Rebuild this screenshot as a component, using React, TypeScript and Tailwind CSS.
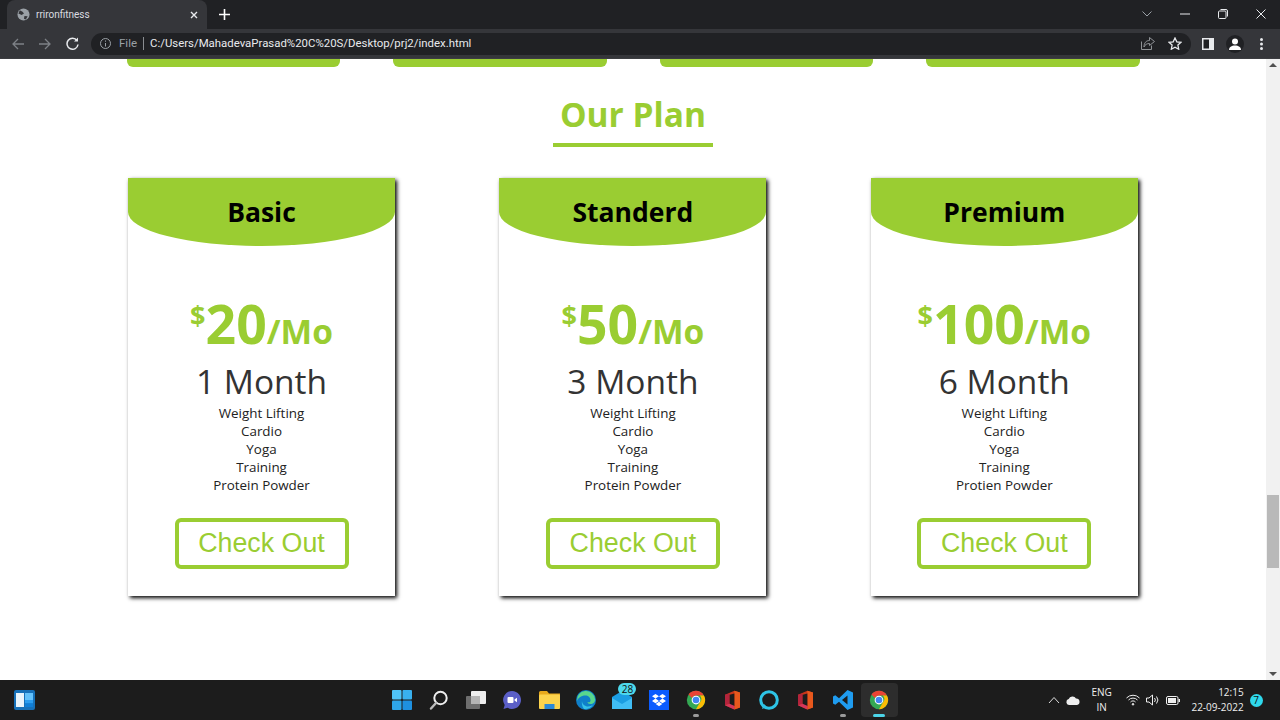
import { ReactNode } from "react";

const plans = [
  { name: "Basic", price: "20", term: "1 Month", last: "Protein Powder" },
  { name: "Standerd", price: "50", term: "3 Month", last: "Protein Powder" },
  { name: "Premium", price: "100", term: "6 Month", last: "Protien Powder" },
];

const PlanCard = ({ plan }: { plan: (typeof plans)[number] }) => (
  <div className="w-[267px] h-[418px] bg-white flex flex-col items-center shadow-[2px_2px_4px_#000000]">
    <div className="w-full h-[68px] bg-[#9acd32] rounded-b-[50%] flex justify-center pt-[14px]">
      <h3 className="text-[26.5px] leading-[40px] font-bold text-black">{plan.name}</h3>
    </div>
    <div className="mt-[40px] h-[75px] flex items-start text-[#9acd32] font-bold">
      <span className="text-[27px] leading-[40px] mt-[9px]">$</span>
      <span className="text-[53.5px] leading-[76px]">{plan.price}</span>
      <span className="text-[33.5px] leading-[44px] mt-[23px]">/Mo</span>
    </div>
    <div className="text-[33.5px] leading-[46px] text-[#333] mt-[-3px]">{plan.term}</div>
    <ul className="text-[13.4px] leading-[18px] text-[#222] text-center">
      <li>Weight Lifting</li>
      <li>Cardio</li>
      <li>Yoga</li>
      <li>Training</li>
      <li>{plan.last}</li>
    </ul>
    <button className="mt-[24px] w-[174px] h-[51px] border-[4px] border-[#9acd32] rounded-[6px] text-[#9acd32] text-[26.8px] font-['Liberation_Sans',sans-serif]">
      Check Out
    </button>
  </div>
);

const ChromeLogo = () => (
  <svg width="20" height="20" viewBox="0 0 48 48">
    <circle cx="24" cy="24" r="22" fill="#34a853" />
    <path d="M24 2a22 22 0 0 1 19 11H24a11 11 0 0 0-10 6L6 11A22 22 0 0 1 24 2z" fill="#ea4335" />
    <path d="M43 13a22 22 0 0 1-19 33l10-17a11 11 0 0 0-1-16z" fill="#fbbc05" />
    <circle cx="24" cy="24" r="10.5" fill="#fff" />
    <circle cx="24" cy="24" r="8" fill="#4285f4" />
  </svg>
);

const OfficeLogo = () => (
  <svg width="15" height="20" viewBox="0 0 16 20">
    <path d="M0 4.500L10 0l6 2v16l-6 2-10-4.500z" fill="#c9361a" />
    <path d="M10 0l6 2v16l-6 2z" fill="#e8581d" />
    <path d="M0 4.500L5 3v11l-5 1.500z" fill="#b3243c" />
    <path d="M5 4.500l5-1.500v13.500l-5-1.500z" fill="#1c1c1c" />
    <path d="M0 15.500l5-1.500 5 2.500V20z" fill="#d6365a" />
  </svg>
);

const Slot = ({ children, dot, active }: { children: ReactNode; dot?: "gray" | "cyan"; active?: boolean }) => (
  <div className={`relative w-[36.7px] h-[34px] flex items-center justify-center rounded ${active ? "bg-[#2d2d2d]" : ""}`}>
    {children}
    {dot && (
      <span className={`absolute bottom-0 h-[3px] rounded-full ${dot === "cyan" ? "w-[12px] bg-[#4cd4e8]" : "w-[6px] bg-[#9a9a9a]"}`} />
    )}
  </div>
);

const Taskbar = () => (
  <div className="h-[40px] bg-[#1c1c1c] flex items-center text-white shrink-0 font-['Open_Sans',sans-serif]">
    {/* widgets */}
    <svg className="ml-[14px]" width="21" height="20" viewBox="0 0 21 20">
      <rect width="21" height="20" rx="2" fill="#1670b8" />
      <rect x="2" y="3" width="8" height="14" fill="#e8f4fc" />
      <rect x="11" y="3" width="8" height="7" fill="#63c1fa" />
      <rect x="11" y="10" width="8" height="3.5" fill="#2a9df0" />
      <rect x="11" y="13.5" width="8" height="3.5" fill="#0f7fd8" />
    </svg>
    <div className="ml-[349px] flex items-center">
      <Slot>
        <svg width="20" height="20" viewBox="0 0 20 20">
          <rect x="0" y="0" width="9.5" height="9.5" rx="1" fill="#4fc3f7" />
          <rect x="10.5" y="0" width="9.5" height="9.5" rx="1" fill="#39b0ee" />
          <rect x="0" y="10.5" width="9.5" height="9.5" rx="1" fill="#2ea6ea" />
          <rect x="10.5" y="10.5" width="9.5" height="9.5" rx="1" fill="#1e90e0" />
        </svg>
      </Slot>
      <Slot>
        <svg width="20" height="20" viewBox="0 0 20 20" fill="none">
          <circle cx="11.5" cy="8" r="6.2" stroke="#eee" strokeWidth="2" />
          <path d="M7 13l-5 5.5" stroke="#bbb" strokeWidth="2.4" strokeLinecap="round" />
        </svg>
      </Slot>
      <Slot>
        <svg width="20" height="19" viewBox="0 0 20 19">
          <rect x="5" y="0" width="15" height="13" rx="1" fill="#eee" />
          <rect x="0" y="5" width="14" height="13" rx="1" fill="#6e6e6e" />
          <rect x="5" y="5" width="9" height="8" fill="#b5b5b5" />
        </svg>
      </Slot>
      <Slot>
        <svg width="20" height="20" viewBox="0 0 20 20">
          <path d="M10 1a9 9 0 1 1-4.5 16.8L1.5 19l1.2-4A9 9 0 0 1 10 1z" fill="#5b5fc7" />
          <rect x="5.5" y="7" width="6" height="6" rx="1" fill="#fff" />
          <path d="M12.5 9.5l2.5-1.8v4.6l-2.5-1.8z" fill="#fff" />
        </svg>
      </Slot>
      <Slot>
        <svg width="21" height="18" viewBox="0 0 21 18">
          <path d="M0 1.5A1.5 1.5 0 0 1 1.500 0H8l2 2.500h11V5H0z" fill="#e8a91c" />
          <rect x="0" y="3.500" width="21" height="14.500" rx="1" fill="#fcd34d" />
          <rect x="5.500" y="13" width="10" height="5" fill="#2b88d8" />
        </svg>
      </Slot>
      <Slot>
        <svg width="20" height="20" viewBox="0 0 20 20" fill="none">
          <circle cx="10" cy="10" r="10" fill="#0f7fc9" />
          <path d="M1 11a9 9 0 0 1 18-2c.5 3-2 5-4.500 5-2 0-3-1-3-2 1 .500 3 .500 3-1.500C14.500 7 12 5.500 9.500 5.500 5 5.500 2 8 1 11z" fill="#58d68d" />
          <path d="M6 11c0 3 3 5.500 6 5.500 2 0 4-.800 5-2-2 4-6 5-9 4.500C6 16.500 5.500 13 6 11z" fill="#36c2e8" />
        </svg>
      </Slot>
      <Slot>
        <div className="relative">
          <svg width="20" height="18" viewBox="0 0 20 18">
            <path d="M0 6l10-6 10 6v12H0z" fill="#1b9de2" />
            <path d="M0 7l10 6 10-6v11H0z" fill="#40bdf5" />
          </svg>
          <span className="absolute left-[6px] top-[-8px] w-[18px] h-[12px] rounded-full bg-[#4dd9ec] text-[#111] text-[10px] leading-[12px] text-center">28</span>
        </div>
      </Slot>
      <Slot>
        <svg width="20" height="20" viewBox="0 0 20 20">
          <rect width="20" height="20" fill="#0b5cff" />
          <path d="M6.500 4L10 6.300 6.500 8.600 3 6.300zM13.500 4L17 6.300l-3.500 2.300L10 6.300zM6.500 8.600L10 10.900l-3.500 2.300L3 10.900zM13.500 8.600l3.500 2.300-3.500 2.300L10 10.900zM6.700 14l3.300-2.200 3.300 2.200-3.300 2.200z" fill="#fff" />
        </svg>
      </Slot>
      <Slot dot="gray"><ChromeLogo /></Slot>
      <Slot><OfficeLogo /></Slot>
      <Slot>
        <svg width="20" height="20" viewBox="0 0 20 20" fill="none">
          <circle cx="10" cy="10" r="8.300" stroke="#2ec4e6" strokeWidth="3" />
          <path d="M3 19l2-5 3 3z" fill="#2ec4e6" />
        </svg>
      </Slot>
      <Slot><OfficeLogo /></Slot>
      <Slot dot="gray">
        <svg width="20" height="20" viewBox="0 0 20 20">
          <path d="M14.500 0L20 2.500v15L14.500 20 6 11.800l-3.700 2.900L0 13.500v-7l2.300-1.200L6 8.200z" fill="#1f9cf0" />
          <path d="M14.500 5.500L9 10l5.500 4.500z" fill="#1c1c1c" />
        </svg>
      </Slot>
      <Slot dot="cyan" active><ChromeLogo /></Slot>
    </div>
    {/* tray */}
    <div className="ml-[150px] flex items-center">
      <svg width="12" height="8" viewBox="0 0 12 8" fill="none">
        <path d="M1 7l5-5.500L11 7" stroke="#ddd" strokeWidth="1" />
      </svg>
      <svg className="ml-[6px]" width="14" height="9" viewBox="0 0 14 9">
        <path d="M3 9a3 3 0 0 1-.300-5.900A4 4 0 0 1 10 2.500 3.300 3.300 0 0 1 11 9z" fill="#eee" />
      </svg>
      <div className="ml-[8px] w-[28px] text-center text-[10px] leading-[15px] text-[#eee]">
        <div>ENG</div>
        <div>IN</div>
      </div>
      <svg className="ml-[10px]" width="14" height="12" viewBox="0 0 14 12" fill="none" stroke="#eee" strokeWidth="1">
        <path d="M.5 4a9 9 0 0 1 13 0M2.500 6a6.200 6.200 0 0 1 9 0M4.500 8a3.400 3.400 0 0 1 5 0" />
        <circle cx="7" cy="10.300" r=".8" fill="#eee" />
      </svg>
      <svg className="ml-[6px]" width="14" height="12" viewBox="0 0 14 12" fill="none" stroke="#eee" strokeWidth="1">
        <path d="M.5 4h2.500L6.500 1v10L3 8H.5z" />
        <path d="M8.500 4a3 3 0 0 1 0 4M10.500 2.500a5.500 5.500 0 0 1 0 7" />
      </svg>
      <svg className="ml-[6px]" width="14" height="9" viewBox="0 0 14 9">
        <rect x=".5" y=".5" width="11.500" height="8" rx="1.500" fill="none" stroke="#eee" />
        <rect x="2" y="2" width="8" height="5" fill="#eee" />
        <rect x="12.500" y="3" width="1.500" height="3" fill="#eee" />
      </svg>
      <div className="ml-[6px] w-[58px] text-right text-[10px] leading-[15px] text-[#eee] whitespace-nowrap">
        <div>12:15</div>
        <div>22-09-2022</div>
      </div>
      <span className="ml-[6px] w-[13px] h-[13px] rounded-full bg-[#2fd9ec] text-[#111] text-[10px] leading-[13px] text-center">7</span>
    </div>
  </div>
);

const BrowserChrome = () => (
  <div className="shrink-0 h-[59px] flex flex-col font-['Roboto',sans-serif]">
    <div className="h-[29px] bg-[#202124] flex items-end pl-[7px] text-[#e8eaed]">
      <div className="w-[200px] h-[29px] bg-[#35363a] rounded-t-[8px] flex items-center pl-[10px] pr-[9px]">
        <svg width="13" height="13" viewBox="0 0 14 14">
          <circle cx="7" cy="7" r="6.500" fill="#9aa0a6" />
          <path d="M3 2.500l3 1.500 1.500 2-2.500 1.500-3.500-1.500zM8 8.500l3.500.500-2 3.500-2-1z" fill="#35363a" />
        </svg>
        <span className="ml-[6px] text-[10px] leading-none text-[#dadce0]">rrironfitness</span>
        <svg className="ml-auto" width="8" height="8" viewBox="0 0 8 8" stroke="#e8eaed" strokeWidth="1.400">
          <path d="M1 1l6 6M7 1L1 7" />
        </svg>
      </div>
      <svg className="ml-[12px] mb-[9px]" width="11" height="11" viewBox="0 0 11 11" stroke="#fff" strokeWidth="1.600">
        <path d="M5.500 0v11M0 5.500h11" />
      </svg>
      <svg className="ml-auto mb-[12px]" width="10" height="6" viewBox="0 0 10 6" fill="none" stroke="#9aa0a6">
        <path d="M.5.500l4.500 4.500L9.500.500" />
      </svg>
      <svg className="ml-[28px] mb-[14px]" width="10" height="2" viewBox="0 0 10 2" stroke="#e8eaed">
        <path d="M0 1h10" />
      </svg>
      <svg className="ml-[28px] mb-[10px]" width="10" height="10" viewBox="0 0 10 10" fill="none" stroke="#e8eaed">
        <rect x=".5" y="2" width="7.500" height="7.500" rx="1" />
        <path d="M2.500.5h5.500a1.500 1.500 0 0 1 1.500 1.500v5.500" />
      </svg>
      <svg className="ml-[28px] mr-[14px] mb-[10px]" width="10" height="10" viewBox="0 0 10 10" stroke="#e8eaed">
        <path d="M.5.500l9 9M9.500.500l-9 9" />
      </svg>
    </div>
    <div className="h-[30px] bg-[#35363a] flex items-center border-b border-[#3c3d41]">
      <svg className="ml-[12px]" width="12" height="12" viewBox="0 0 12 12" fill="none" stroke="#7d8186" strokeWidth="1.300">
        <path d="M12 6H1M6 1L1 6l5 5" />
      </svg>
      <svg className="ml-[15px]" width="12" height="12" viewBox="0 0 12 12" fill="none" stroke="#7d8186" strokeWidth="1.300">
        <path d="M0 6h11M6 1l5 5-5 5" />
      </svg>
      <svg className="ml-[15px]" width="13" height="13" viewBox="0 0 13 13" fill="none" stroke="#e8eaed" strokeWidth="1.500">
        <path d="M11 3.500A5.500 5.500 0 1 0 12 7.500" />
        <path d="M12 .500v4H8z" fill="#e8eaed" stroke="none" />
      </svg>
      <div className="ml-[12px] w-[1100px] h-[22px] bg-[#202124] rounded-full flex items-center pl-[9px] pr-[9px]">
        <svg width="11" height="11" viewBox="0 0 11 11" fill="none" stroke="#9aa0a6">
          <circle cx="5.500" cy="5.500" r="5" />
          <path d="M5.500 5v3.500M5.500 2.500v1.200" />
        </svg>
        <span className="ml-[8px] text-[11.5px] text-[#9aa0a6]">File</span>
        <span className="ml-[6px] w-px h-[13px] bg-[#8a8d91]" />
        <span className="ml-[6px] text-[11.4px] text-[#e8eaed] whitespace-nowrap">C:/Users/MahadevaPrasad%20C%20S/Desktop/prj2/index.html</span>
        <svg className="ml-auto" width="14" height="13" viewBox="0 0 14 13" fill="none" stroke="#8f9296">
          <path d="M.5 4.500v8h10v-4M8.500.5l5 4-5 4V6.500C6 6.500 4 7.500 3 10c0-4 2-6.500 5.500-6.500z" />
        </svg>
        <svg className="ml-[13px]" width="14" height="13" viewBox="0 0 14 13" fill="none" stroke="#e8eaed" strokeWidth="1.300">
          <path d="M7 1l1.800 3.800 4.200.5-3.100 2.800.8 4.100L7 10.200l-3.700 2 .8-4.100L1 5.300l4.200-.5z" />
        </svg>
      </div>
      <svg className="ml-[11px]" width="12" height="12" viewBox="0 0 12 12">
        <rect width="12" height="12" fill="#e8eaed" />
        <rect x="1.500" y="1.500" width="5.500" height="9" fill="#202124" />
      </svg>
      <div className="ml-[12px] w-[18px] h-[18px] rounded-full bg-[#202124] flex items-center justify-center">
        <svg width="12" height="12" viewBox="0 0 12 12" fill="#fff">
          <circle cx="6" cy="3.500" r="3" />
          <path d="M0 12c0-3 2.500-4.500 6-4.500s6 1.500 6 4.500z" />
        </svg>
      </div>
      <svg className="ml-[16px]" width="3" height="12" viewBox="0 0 3 12" fill="#e8eaed">
        <circle cx="1.500" cy="1.500" r="1.500" />
        <circle cx="1.500" cy="6" r="1.500" />
        <circle cx="1.500" cy="10.500" r="1.500" />
      </svg>
    </div>
  </div>
);

const Scrollbar = () => (
  <div className="w-[14px] shrink-0 bg-[#f1f1f1] flex flex-col items-center pt-[4px] pb-[4px]">
    <span className="w-0 h-0 border-x-[4px] border-x-transparent border-b-[4px] border-b-[#505050]" />
    <div className="w-[12px] h-[73px] bg-[#b9b9b9] mt-[428px]" />
    <span className="mt-auto w-0 h-0 border-x-[4px] border-x-transparent border-t-[4px] border-t-[#505050]" />
  </div>
);

export default function App() {
  return (
    <div className="w-[1280px] h-[720px] overflow-hidden flex flex-col bg-white font-['Open_Sans',sans-serif]">
      <BrowserChrome />
      <div className="flex flex-1 min-h-0">
        <main className="flex-1 flex flex-col">
          <div className="flex pl-[127px] gap-[53px]">
            <div className="w-[213px] h-[8px] bg-[#9acd32] rounded-b-[6px]" />
            <div className="w-[214px] h-[8px] bg-[#9acd32] rounded-b-[6px]" />
            <div className="w-[213px] h-[8px] bg-[#9acd32] rounded-b-[6px]" />
            <div className="w-[214px] h-[8px] bg-[#9acd32] rounded-b-[6px]" />
          </div>
          <div className="flex flex-col items-center mt-[25px]">
            <h2 className="text-[33.5px] leading-[44px] font-bold text-[#9acd32]">Our Plan</h2>
            <div className="w-[160px] h-[4px] bg-[#9acd32] mt-[7px]" />
          </div>
          <div className="mt-[31px] pl-[128px] pr-[128.2px] flex justify-between">
            {plans.map((plan) => (
              <PlanCard key={plan.name} plan={plan} />
            ))}
          </div>
        </main>
        <Scrollbar />
      </div>
      <Taskbar />
    </div>
  );
}
